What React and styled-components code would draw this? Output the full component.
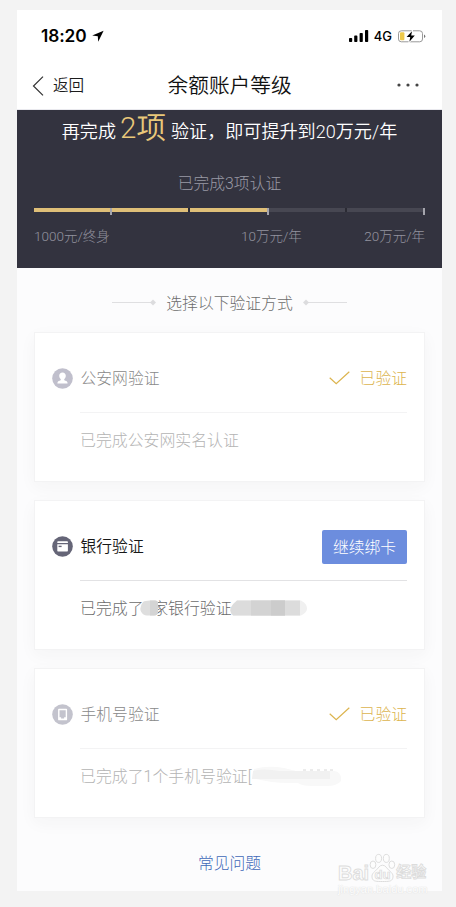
import React from 'react';
import styled, { createGlobalStyle } from 'styled-components';

const GlobalStyle = createGlobalStyle`
  *, *::before, *::after { box-sizing: border-box; }
  body {
    margin: 0;
    background: #f3f3f3;
    font-family: Roboto, "Noto Sans CJK SC", sans-serif;
    font-weight: 300;
  }
  svg { display: block; flex: none; }
`;

const Page = styled.div`
  height: 907px;
  padding: 10px 14px 0 17px;
  overflow: hidden;
`;

const Phone = styled.main`
  position: relative;
  width: 425px;
  height: 881px;
  display: flex;
  flex-direction: column;
  background: #fcfcfd;
`;

const StatusBar = styled.header`
  height: 52px;
  flex: none;
  padding: 0 16px 0 24px;
  display: flex;
  align-items: center;
  justify-content: space-between;
  background: #fff;
`;

const StatusGroup = styled.div`
  display: flex;
  align-items: center;
  gap: 5px;
`;

const Clock = styled.span`
  font: 600 17.3px/20px Inter, sans-serif;
  letter-spacing: -0.1px;
  color: #000;
`;

const Network = styled.span`
  font: 500 13px/16px Inter, sans-serif;
  color: #000;
  margin-right: 1px;
`;

const NavBar = styled.nav`
  height: 48px;
  flex: none;
  padding: 0 22px 0 15px;
  display: grid;
  grid-template-columns: 135.5px auto 1fr;
  align-items: center;
  background: #fff;
  border-bottom: 1px solid #e9e9ee;
`;

const BackLink = styled.a`
  display: flex;
  align-items: center;
  gap: 9px;
  font-size: 15.6px;
  line-height: 24px;
  color: #1c1c1c;
  font-weight: 350;
`;

const NavTitle = styled.h1`
  margin: 0;
  font-size: 20.7px;
  line-height: 30px;
  font-weight: 350;
  color: #111;
`;

const MoreButton = styled.div`
  justify-self: end;
`;

const Summary = styled.section`
  height: 158px;
  flex: none;
  padding: 0 17px;
  background: #33333f;
  display: flex;
  flex-direction: column;
`;

const Headline = styled.p`
  margin: 0;
  height: 62px;
  line-height: 40px;
  text-align: center;
  white-space: nowrap;
  font-size: 18.1px;
  font-weight: 350;
  color: #fff;
`;

const Highlight = styled.span`
  margin: 0 5px 0 4px;
  font-size: 29.5px;
  line-height: 36px;
  color: #e9c87a;
`;

const Progress = styled.p`
  margin: 0;
  height: 36px;
  line-height: 24px;
  text-align: center;
  font-size: 15.8px;
  color: #9a9aa5;
`;

const Track = styled.div`
  display: grid;
  grid-template-columns: repeat(5, 1fr);
  width: 391px;
  height: 7px;
`;

const Segment = styled.div`
  display: flex;
  &::before {
    content: '';
    flex: 1;
    height: 4px;
    background: ${(p) => (p.$done ? '#dfbf78' : '#474752')};
  }
  &::after {
    content: '';
    width: 2px;
    height: ${(p) => (p.$tick ? 7 : 4)}px;
    background: ${(p) => (p.$tick ? '#a5a5ad' : '#2b2b34')};
  }
`;

const Limits = styled.div`
  display: grid;
  grid-template-columns: 207px 1fr auto;
  margin-top: 11px;
  width: 391px;
  font-size: 13.5px;
  line-height: 20px;
  color: #94949f;
`;

const SectionTitle = styled.h2`
  height: 64px;
  flex: none;
  margin: 0;
  padding-top: 5px;
  display: flex;
  align-items: center;
  justify-content: center;
  gap: 9px;
  font-size: 15.8px;
  font-weight: 300;
  color: #6c6c6c;
`;

const CardList = styled.div`
  display: flex;
  flex-direction: column;
  gap: 18px;
  padding: 0 17px;
`;

const Card = styled.article`
  height: 150px;
  padding: 11px 17px 0;
  border: 1px solid #f3f3f4;
  background: #fff;
  box-shadow: 0 5px 16px rgba(40, 40, 50, 0.04);
`;

const CardHead = styled.div`
  height: 68px;
  display: flex;
  align-items: center;
  gap: 7.5px;
`;

const CardTitle = styled.h3`
  flex: 1;
  margin: 0;
  padding-top: 2px;
  font-size: 15.8px;
  line-height: 24px;
  font-weight: ${(p) => (p.$active ? 350 : 300)};
  color: ${(p) => (p.$active ? '#181818' : '#898989')};
`;

const CardBody = styled.div`
  position: relative;
  margin-left: 28px;
  border-top: 1px solid ${(p) => (p.$active ? '#e2e2e4' : '#f3f3f4')};
  padding-top: 16px;
  font-size: 15.9px;
  line-height: 24px;
  white-space: nowrap;
  color: ${(p) => (p.$active ? '#6c6c6c' : '#b4b4b4')};
`;

const Verified = styled.span`
  display: flex;
  align-items: center;
  gap: 10px;
  padding-top: 2px;
  font-size: 15.8px;
  line-height: 24px;
  color: #dcb44e;
`;

const BindButton = styled.button`
  width: 85px;
  height: 34px;
  margin-top: 2px;
  padding: 1px 0 0;
  border: 0;
  border-radius: 2px;
  background: #6c8dde;
  color: #fff;
  font: 300 15.8px/33px Roboto, "Noto Sans CJK SC", sans-serif;
`;

const HiddenDigit = styled.span`
  display: inline-block;
  width: 8.6px;
`;

const Redaction = styled.svg`
  position: absolute;
  left: ${(p) => p.$left}px;
  top: ${(p) => p.$top}px;
`;

const Faq = styled.a`
  margin-top: 34px;
  text-align: center;
  font-size: 15.8px;
  line-height: 24px;
  color: #4068b8;
`;

const Watermark = styled.div`
  position: absolute;
  left: 321px;
  top: 841px;
  width: 92px;
  display: flex;
  flex-direction: column;
  color: #fdfdfd;
`;

const WatermarkBrand = styled.div`
  height: 32px;
  display: flex;
  align-items: flex-end;
  -webkit-text-stroke: 0.9px #dcdcdc;
  font: 700 20px/20px "Liberation Sans", "Noto Sans CJK SC", sans-serif;
`;

const WatermarkCn = styled.span`
  font-size: 15px;
  line-height: 22px;
`;

const WatermarkUrl = styled.div`
  font: 400 11px/12px "Liberation Sans", sans-serif;
  letter-spacing: 0.05px;
  text-shadow: 0 0 1px #dadada, 0 0 2px #e9e9e9;
`;

const LocationArrow = () => (
  <svg width="12" height="12" viewBox="0 0 12 12">
    <path d="M11.6.7.2 5.4l5.6.9.4 5.4z" fill="#000" />
  </svg>
);

const SignalIcon = () => (
  <svg width="20" height="12" viewBox="0 0 20 12">
    <rect x="0" y="8" width="3.2" height="4" rx=".8" />
    <rect x="5.2" y="5.6" width="3.2" height="6.4" rx=".8" />
    <rect x="10.6" y="3" width="3.2" height="9" rx=".8" />
    <rect x="16" y="0" width="3.2" height="12" rx=".8" />
  </svg>
);

const BatteryIcon = () => (
  <svg width="28" height="13" viewBox="0 0 28 13">
    <rect x=".5" y=".8" width="24" height="11" rx="2.8" fill="#fff" stroke="#8d8d8d" strokeWidth=".9" />
    <rect x="2" y="2.3" width="4.4" height="8" rx="1" fill="#edc94b" />
    <path d="M26 4.6q1.3.5 1.3 1.7T26 8.1z" fill="#777" />
    <path d="M14 1.3 8.6 7h3.6l-.8 4.7 5.4-6.1h-3.6z" fill="#000" stroke="#fff" strokeWidth="1.6" paintOrder="stroke" />
  </svg>
);

const BackIcon = () => (
  <svg width="12" height="20" viewBox="0 0 12 20">
    <path d="M11 .6 1.5 10 11 19.4" fill="none" stroke="#333" strokeWidth="1.2" />
  </svg>
);

const MoreIcon = () => (
  <svg width="23" height="6" viewBox="0 0 23 6" fill="#444">
    <circle cx="2" cy="2" r="1.6" />
    <circle cx="11" cy="2" r="1.6" />
    <circle cx="20" cy="2" r="1.6" />
  </svg>
);

const Ornament = ({ flip }) => (
  <svg width="46" height="8" viewBox="0 0 46 8" fill="#dcdcde">
    <g transform={flip ? 'translate(46 0) scale(-1 1)' : undefined}>
      <rect x="1" y="3.1" width="41" height=".9" />
      <path d="m42 .6 3 3-3 3-3-3z" />
    </g>
  </svg>
);

const CheckIcon = () => (
  <svg width="21" height="18" viewBox="0 0 21 18">
    <path d="m.7 7.8 6.5 6L20.3 1.7" fill="none" stroke="#dcb44e" strokeWidth="1.2" />
  </svg>
);

const PersonIcon = () => (
  <svg width="21" height="21" viewBox="0 0 21 21">
    <circle cx="10.5" cy="10.5" r="10.3" fill="#c0bfcc" />
    <path d="M10.5 4.4c2 0 3.3 1.4 3.3 3.4 0 1.5-.7 2.7-1.6 3.4 0 1 .3 1.3 1.2 1.6 1.2.4 2.2.8 2.2 2.7H5.4c0-1.9 1-2.3 2.2-2.7.9-.3 1.2-.6 1.2-1.6-.9-.7-1.6-1.9-1.6-3.4 0-2 1.3-3.4 3.3-3.4z" fill="#fff" />
  </svg>
);

const BankIcon = () => (
  <svg width="21" height="21" viewBox="0 0 21 21">
    <circle cx="10.5" cy="10.5" r="10.3" fill="#656577" />
    <path d="M6 5.2h9.2a.7.7 0 0 1 .7.7v1.2H5.300V5.900a.7.7 0 0 1 .7-.7z" fill="#fff" />
    <path d="M5.300 8.200h10.600v6.500a.7.7 0 0 1-.7.7H6a.7.7 0 0 1-.7-.7z" fill="#fff" />
    <rect x="6.6" y="9.7" width="3" height="1.4" fill="#656577" />
  </svg>
);

const PhoneIcon = () => (
  <svg width="21" height="21" viewBox="0 0 21 21">
    <circle cx="10.5" cy="10.5" r="10.3" fill="#c3c3cd" />
    <path fillRule="evenodd" d="M7 4.7h7.2a.9.9 0 0 1 .9.9v9.8a.9.9 0 0 1-.9.9H7a.9.9 0 0 1-.9-.9V5.6a.9.9 0 0 1 .9-.9zm.5 1.6v7h1.600v1.300h3v-1.300h1.600v-7z" fill="#fff" />
  </svg>
);

const PawIcon = () => (
  <svg width="27" height="30" viewBox="0 0 29 31" fill="#fdfdfd" stroke="#dadada" strokeWidth="1">
    <ellipse cx="10.3" cy="5.2" rx="3.2" ry="4.3" />
    <ellipse cx="18.6" cy="5.2" rx="3.2" ry="4.3" />
    <ellipse cx="4.3" cy="12" rx="3.1" ry="4" />
    <ellipse cx="24.5" cy="12" rx="3.1" ry="4" />
    <path d="M14.5 12.5c3.5 0 4.5 3.5 7.5 6s4.5 4.5 3.5 8-4.5 3.5-11 3.5-10 0-11-3.5.5-5.5 3.5-8 4-6 7.5-6z" />
    <text x="14.5" y="27" textAnchor="middle" fontFamily="Liberation Sans, sans-serif" fontWeight="700" fontSize="14" strokeWidth=".8">du</text>
  </svg>
);

const BankCountMask = () => (
  <Redaction $left={60} $top={19} width="20" height="16" viewBox="0 0 20 16">
    <path d="M3 2q2-1.5 7-1.5h5q3 0 3 3v8q0 4-4 4H7q-4 0-6-4t2-9.5z" fill="#dedede" />
    <path d="M10 .5h5q3 0 3 3v8q0 4-4 4h-4z" fill="#d4d4d4" />
  </Redaction>
);

const BankNameMask = () => (
  <Redaction $left={150} $top={19} width="78" height="16" viewBox="0 0 78 16">
    <path d="M7 .5h64q6 3 6 8 0 4-6 7H3q-4-4-2-8t6-7z" fill="#f0f0f0" />
    <path d="M7 .5h63v15H3q-4-4-2-8t6-7z" fill="#dcdcdc" />
    <path d="M21 .5h34v15H21z" fill="#d3d3d3" />
    <path d="M41 .5h14v15H41z" fill="#cccccc" />
  </Redaction>
);

const PhoneNumberMask = () => (
  <Redaction $left={172} $top={17} width="90" height="24" viewBox="0 0 90 24">
    <path d="M2 3q14-4 30-1l12 3h38q8 1 7 10-4 5-14 5H60q-10 0-14-3H36Q20 17 0 12z" fill="#f8f8f8" />
    <path d="M1 5q10-3 27 0h50v8H0z" fill="#f1f1f1" />
    <path d="M51 4h3m4 0h3m4 0h3m4 0h3m3 0h3" fill="none" stroke="#d8d8d8" strokeWidth="1" />
  </Redaction>
);

const VerifiedMark = () => (
  <Verified>
    <CheckIcon />
    已验证
  </Verified>
);

const segments = [
  { done: true, tick: true },
  { done: true, tick: false },
  { done: true, tick: true },
  { done: false, tick: false },
  { done: false, tick: true },
];

export default function App() {
  return (
    <Page>
      <GlobalStyle />
      <Phone>
        <StatusBar>
          <StatusGroup>
            <Clock>18:20</Clock>
            <LocationArrow />
          </StatusGroup>
          <StatusGroup>
            <SignalIcon />
            <Network>4G</Network>
            <BatteryIcon />
          </StatusGroup>
        </StatusBar>
        <NavBar>
          <BackLink>
            <BackIcon />
            返回
          </BackLink>
          <NavTitle>余额账户等级</NavTitle>
          <MoreButton>
            <MoreIcon />
          </MoreButton>
        </NavBar>
        <Summary>
          <Headline>
            再完成<Highlight>2项</Highlight>验证，即可提升到20万元/年
          </Headline>
          <Progress>已完成3项认证</Progress>
          <Track>
            {segments.map((s, i) => (
              <Segment key={i} $done={s.done} $tick={s.tick} />
            ))}
          </Track>
          <Limits>
            <span>1000元/终身</span>
            <span>10万元/年</span>
            <span>20万元/年</span>
          </Limits>
        </Summary>
        <SectionTitle>
          <Ornament />
          <span>选择以下验证方式</span>
          <Ornament flip />
        </SectionTitle>
        <CardList>
          <Card>
            <CardHead>
              <PersonIcon />
              <CardTitle>公安网验证</CardTitle>
              <VerifiedMark />
            </CardHead>
            <CardBody>已完成公安网实名认证</CardBody>
          </Card>
          <Card>
            <CardHead>
              <BankIcon />
              <CardTitle $active>银行验证</CardTitle>
              <BindButton>继续绑卡</BindButton>
            </CardHead>
            <CardBody $active>
              已完成了<HiddenDigit />家银行验证
              <BankCountMask />
              <BankNameMask />
            </CardBody>
          </Card>
          <Card>
            <CardHead>
              <PhoneIcon />
              <CardTitle>手机号验证</CardTitle>
              <VerifiedMark />
            </CardHead>
            <CardBody>
              已完成了1个手机号验证[
              <PhoneNumberMask />
            </CardBody>
          </Card>
        </CardList>
        <Faq>常见问题</Faq>
        <Watermark>
          <WatermarkBrand>
            <span>Bai</span>
            <PawIcon />
            <WatermarkCn>经验</WatermarkCn>
          </WatermarkBrand>
          <WatermarkUrl>jingyan.baidu.com</WatermarkUrl>
        </Watermark>
      </Phone>
    </Page>
  );
}
